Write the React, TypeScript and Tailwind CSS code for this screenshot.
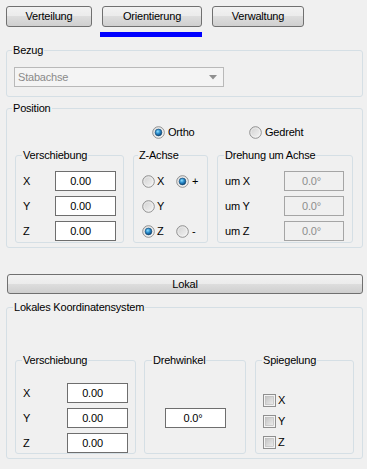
import React from "react";

const btnBg =
  "bg-[linear-gradient(to_bottom,#f2f2f2_0%,#ebebeb_50%,#dddddd_50%,#cfcfcf_100%)]";

function Button({ label, w }: { label: string; w: string }) {
  return (
    <div
      className={`${w} h-full flex items-center justify-center border border-[#707070] rounded-[3px] ${btnBg} text-[11px] text-black`}
    >
      {label}
    </div>
  );
}

function Radio({ checked }: { checked?: boolean }) {
  return (
    <svg width="13" height="13" viewBox="0 0 13 13" className="shrink-0">
      <defs>
        <linearGradient id="rgOuter" x1="0" y1="0" x2="1" y2="1">
          <stop offset="0" stopColor="#cfcfcf" />
          <stop offset="1" stopColor="#f6f6f6" />
        </linearGradient>
        <radialGradient id="rgDot" cx="0.4" cy="0.35" r="0.65">
          <stop offset="0" stopColor="#8fe0ff" />
          <stop offset="0.5" stopColor="#2a8ccd" />
          <stop offset="1" stopColor="#0b4779" />
        </radialGradient>
      </defs>
      <circle cx="6.5" cy="6.5" r="5.8" fill="url(#rgOuter)" stroke="#8f8f8f" strokeWidth="1" />
      <circle cx="6.5" cy="6.5" r="4.6" fill="none" stroke="#ffffff" strokeWidth="0.6" opacity="0.7" />
      {checked && (
        <circle cx="6.5" cy="6.5" r="3.4" fill="url(#rgDot)" stroke="#1a4a72" strokeWidth="0.6" />
      )}
    </svg>
  );
}

function Check() {
  return (
    <svg width="13" height="13" viewBox="0 0 13 13" className="shrink-0">
      <defs>
        <linearGradient id="cbIn" x1="0" y1="0" x2="1" y2="1">
          <stop offset="0" stopColor="#c4c4c4" />
          <stop offset="1" stopColor="#ececec" />
        </linearGradient>
      </defs>
      <rect x="0.5" y="0.5" width="12" height="12" fill="#f4f4f4" stroke="#8f8f8f" />
      <rect x="2.5" y="2.5" width="8" height="8" fill="url(#cbIn)" stroke="#b4b4b4" strokeWidth="0.6" />
    </svg>
  );
}

function Field({ value, disabled, w, pr }: { value: string; disabled?: boolean; w: string; pr: string }) {
  return (
    <div
      className={`${w} h-[20px] border ${
        disabled ? "border-[#a5a5a5] bg-[#f0f0f0] text-[#8d8d8d]" : "border-[#6e6e6e] bg-white text-black"
      } flex items-center justify-center ${pr} text-[11px]`}
    >
      {value}
    </div>
  );
}

function Group({
  title,
  className,
  children,
}: {
  title: string;
  className: string;
  children: React.ReactNode;
}) {
  return (
    <fieldset className={`border border-[#d5dfe5] rounded-[3px] min-w-0 ${className}`}>
      <legend className="text-[11px] leading-[13px] px-[1px] text-black">{title}</legend>
      {children}
    </fieldset>
  );
}

function Row({ children, className = "" }: { children: React.ReactNode; className?: string }) {
  return <div className={`h-[20px] flex items-center ${className}`}>{children}</div>;
}

export default function App() {
  return (
    <div
      className="w-[367px] h-[469px] bg-[#f0f0f0] pl-[6px] pr-[4px] pt-[6px] text-[11px] tracking-[-0.2px] text-black overflow-hidden"
      style={{ fontFamily: '"Liberation Sans", Arial, sans-serif' }}
    >
      {/* Tabs */}
      <div className="flex h-[21px] gap-[10px]">
        <Button label="Verteilung" w="w-[86px]" />
        <Button label="Orientierung" w="w-[100px]" />
        <Button label="Verwaltung" w="w-[92px]" />
      </div>
      <div className="mt-[5px] ml-[94px] w-[102px] h-[5px] bg-[#0000ff]" />

      {/* Bezug */}
      <Group title="Bezug" className="mt-[7px] pt-[10px] pb-[9px] [&>legend]:ml-[5px]">
        <div className="ml-[7px] w-[210px] h-[20px] border border-[#b9b9b9] bg-[#f4f4f4] flex items-center justify-between pl-[3px] pr-[6px] text-[#8a8a8a]">
          <span>Stabachse</span>
          <svg width="8" height="5" viewBox="0 0 8 5">
            <path d="M0 0 H8 L4 4.5 Z" fill="#8f8f8f" />
          </svg>
        </div>
      </Group>

      {/* Position */}
      <Group title="Position" className="mt-[5px] pb-[4px] [&>legend]:ml-[5px]">
        <div className="mt-[11px] h-[13px] flex items-center pl-[145px]">
          <div className="w-[97px] flex items-center gap-[3px]">
            <Radio checked />
            <span>Ortho</span>
          </div>
          <div className="flex items-center gap-[3px]">
            <Radio />
            <span>Gedreht</span>
          </div>
        </div>
        <div className="mt-[10px] flex pl-[8px] gap-[9px]">
          <Group title="Verschiebung" className="w-[109px] pt-[9px] pb-[1px] [&>legend]:ml-[6px]">
            <div className="flex flex-col gap-[5px]">
              {["X", "Y", "Z"].map((a) => (
                <Row key={a} className="pl-[7px]">
                  <span className="w-[32px]">{a}</span>
                  <Field value="0.00" w="w-[61px]" pr="pr-[10px]" />
                </Row>
              ))}
            </div>
          </Group>
          <Group title="Z-Achse" className="w-[75px] pt-[9px] pb-[1px] [&>legend]:ml-[4px]">
            <div className="flex flex-col gap-[5px] pl-[8px]">
              <Row>
                <div className="w-[34px] flex items-center gap-[2px]">
                  <Radio />
                  <span>X</span>
                </div>
                <div className="flex items-center gap-[3px]">
                  <Radio checked />
                  <span>+</span>
                </div>
              </Row>
              <Row>
                <div className="w-[34px] flex items-center gap-[2px]">
                  <Radio />
                  <span>Y</span>
                </div>
              </Row>
              <Row>
                <div className="w-[34px] flex items-center gap-[2px]">
                  <Radio checked />
                  <span>Z</span>
                </div>
                <div className="flex items-center gap-[3px]">
                  <Radio />
                  <span>-</span>
                </div>
              </Row>
            </div>
          </Group>
          <Group title="Drehung um Achse" className="w-[136px] pt-[9px] pb-[1px] [&>legend]:ml-[6px]">
            <div className="flex flex-col gap-[5px]">
              {["X", "Y", "Z"].map((a) => (
                <Row key={a} className="pl-[7px]">
                  <span className="w-[59px]">um {a}</span>
                  <Field value="0.0°" disabled w="w-[60px]" pr="pr-[5px]" />
                </Row>
              ))}
            </div>
          </Group>
        </div>
      </Group>

      {/* Lokal button */}
      <div className="mt-[26px] ml-[1px] h-[20px] flex">
        <Button label="Lokal" w="w-[356px]" />
      </div>

      {/* Lokales Koordinatensystem */}
      <Group title="Lokales Koordinatensystem" className="mt-[7px] pb-[4px] [&>legend]:ml-[6px]">
        <div className="mt-[40px] flex pl-[8px]">
          <Group title="Verschiebung" className="w-[121px] pt-[16px] [&>legend]:ml-[6px]">
            <div className="flex flex-col gap-[5px]">
              {["X", "Y", "Z"].map((a) => (
                <Row key={a} className="pl-[7px]">
                  <span className="w-[44px]">{a}</span>
                  <Field value="0.00" w="w-[61px]" pr="pr-[10px]" />
                </Row>
              ))}
            </div>
          </Group>
          <Group title="Drehwinkel" className="ml-[8px] w-[102px] pt-[41px] [&>legend]:ml-[7px]">
            <div className="ml-[20px]">
              <Field value="0.0°" w="w-[61px]" pr="pr-[5px]" />
            </div>
          </Group>
          <Group title="Spiegelung" className="ml-[9px] w-[99px] pt-[27px] [&>legend]:ml-[6px]">
            <div className="flex flex-col gap-[8px] pl-[7px]">
              {["X", "Y", "Z"].map((a) => (
                <div key={a} className="h-[13px] flex items-center gap-[2px]">
                  <Check />
                  <span>{a}</span>
                </div>
              ))}
            </div>
          </Group>
        </div>
      </Group>
    </div>
  );
}
